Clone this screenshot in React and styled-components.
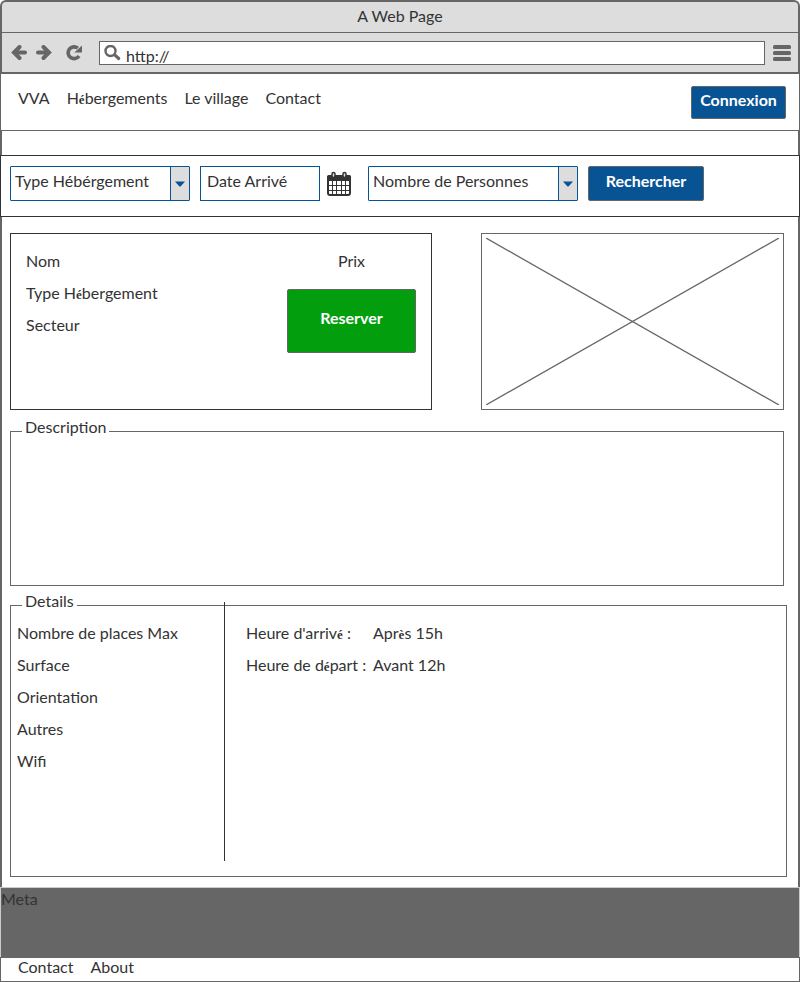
import React from "react";
import styled, { createGlobalStyle } from "styled-components";

const ink = "#333333";
const line = "#666666";
const blue = "#085394";
const chrome = "#dddddd";

const GlobalStyle = createGlobalStyle`
  *, *::before, *::after { box-sizing: border-box; }
  body { margin: 0; background: #fff; }
  body, button, input, select {
    font-family: Lato, "Open Sans", sans-serif;
    font-size: 16px;
    line-height: 20px;
    color: ${ink};
  }
`;

const Page = styled.div`
  min-height: 100vh;
  display: flex;
  flex-direction: column;
`;

const BrowserBar = styled.header`
  border: 2px solid ${line};
  border-radius: 6px 6px 0 0;
  background: ${chrome};
`;

const TitleBar = styled.div`
  padding: 4px 0 6px;
  border-bottom: 1px solid ${line};
  text-align: center;
`;

const Toolbar = styled.div`
  height: 39px;
  padding: 0 7px 0 9px;
  display: flex;
  align-items: center;
`;

const ToolButton = styled.button`
  width: 16px;
  height: 16px;
  margin-right: ${(p) => p.$after || 0}px;
  padding: 0;
  display: flex;
  flex: none;
  border: 0;
  background: none;
`;

const Address = styled.label`
  flex: 1;
  height: 24px;
  margin-right: 8px;
  padding: 0 4px;
  display: flex;
  align-items: flex-start;
  gap: 5px;
  overflow: hidden;
  border: 1px solid ${line};
  background: #fff;

  svg { flex: none; margin-top: 3px; }
`;

const AddressInput = styled.input`
  flex: 1;
  min-width: 0;
  height: 22px;
  padding: 6px 0 0;
  border: 0;
  outline: 0;
  background: none;
`;

const Menu = styled(ToolButton)`
  width: 18px;
  height: 18px;
`;

const NavBar = styled.nav`
  padding: 12px 13px 11px 17px;
  display: flex;
  justify-content: space-between;
  border: solid ${line};
  border-width: 0 1px 1px;
`;

const Links = styled.ul`
  margin: 0;
  padding: ${(p) => p.$top || 0}px 0 0;
  display: flex;
  gap: 17px;
  line-height: 18px;
  list-style: none;
`;

const Link = styled.a`
  color: inherit;
  text-decoration: none;
`;

const Button = styled.button`
  width: ${(p) => p.$width}px;
  height: ${(p) => p.$height}px;
  padding: 0 0 6px;
  border: 1px solid ${line};
  border-radius: 2px;
  background: ${(p) => p.$color || blue};
  color: #fff;
  font-weight: 700;
`;

const Band = styled.div`
  height: 24px;
  border: solid ${line};
  border-width: 0 2px;
`;

const SearchForm = styled.form`
  padding: 10px 9px 15px;
  display: flex;
  gap: 10px;
  border: 1px solid ${ink};
`;

const SelectBox = styled.span`
  width: ${(p) => p.$width}px;
  height: 35px;
  display: grid;
  grid-template-columns: 1fr 19px;
  border: 1px solid ${blue};
  border-radius: 1px;
`;

const Select = styled.select`
  grid-area: 1 / 1 / 2 / 3;
  min-width: 0;
  padding: 0 20px 6px 4px;
  border: 0;
  background: #fff;
  appearance: none;
`;

const SelectArrow = styled.span`
  grid-area: 1 / 2 / 2 / 3;
  display: flex;
  align-items: center;
  justify-content: center;
  border-left: 1px solid ${blue};
  background: ${chrome};
  pointer-events: none;
`;

const DateField = styled.span`
  display: flex;
`;

const DateInput = styled.input`
  width: 120px;
  height: 35px;
  padding: 0 6px 6px;
  border: 1px solid ${blue};

  &::placeholder { color: ${ink}; opacity: 1; }
`;

const CalendarButton = styled.button`
  width: 38px;
  padding: 0;
  display: flex;
  align-items: center;
  justify-content: center;
  border: 0;
  background: none;
`;

const Main = styled.main`
  flex: 1;
  padding: 16px 11px 10px 8px;
  border: solid ${line};
  border-width: 0 2px;
`;

const Summary = styled.section`
  margin-right: 3px;
  display: grid;
  grid-template-columns: 422fr 303fr;
  gap: 49px;
`;

const Card = styled.div`
  height: 177px;
  padding: 11px 15px;
  display: flex;
  justify-content: space-between;
  border: 1px solid ${ink};
`;

const Lines = styled.ul`
  margin: 0;
  padding: 0;
  list-style: none;
  line-height: 32px;
`;

const Booking = styled.div`
  display: flex;
  flex-direction: column;
  align-items: center;
  gap: 12px;
  line-height: 32px;
`;

const Picture = styled.div`
  height: 177px;
  padding: 4px;
  border: 1px solid ${line};

  svg { display: block; width: 100%; height: 100%; }
`;

const Group = styled.fieldset`
  height: ${(p) => p.$height}px;
  min-width: 0;
  margin: ${(p) => (p.$wide ? "5px 0 0" : "7px 3px 0 0")};
  padding: 0 6px;
  border: 1px solid ${line};
`;

const Legend = styled.legend`
  margin-left: 5px;
  padding: 0 3px 8px;
`;

const DetailColumns = styled.div`
  height: 259px;
  margin-top: -17px;
  display: grid;
  grid-template-columns: 208px 1fr;
`;

const Features = styled.div`
  padding-top: 15px;
  border-right: 1px solid ${ink};
`;

const Hours = styled.dl`
  margin: 0;
  padding: 15px 0 0 21px;
  display: grid;
  grid-template-columns: 127px 1fr;
  align-content: start;
  line-height: 32px;

  dt, dd { margin: 0; white-space: nowrap; }
`;

const Accent = styled.span`
  font-family: "Liberation Serif", serif;
  font-size: 13px;
  font-weight: 700;
  line-height: 1;
`;

const Meta = styled.section`
  height: 70px;
  padding-top: 1px;
  border: solid #cccccc;
  border-width: 1px 1px 0;
  background: ${line};
`;

const Footer = styled.footer`
  height: 25px;
  padding-left: 17px;
  border: 1px solid ${line};
`;

/* Accented letters are set smaller than the text around them. */
const Text = ({ children }) =>
  children
    .split(/([éè])/)
    .map((part, i) => (i % 2 ? <Accent key={i}>{part}</Accent> : part));

const Arrow = ({ back }) => (
  <svg width="16" height="16" viewBox="0 0 16 16" fill="none" stroke={line} strokeWidth="4">
    {back ? (
      <>
        <path d="M4 7.500H14" strokeLinecap="round" />
        <path d="M8.500 2L3 7.500L8.500 13" strokeLinecap="round" />
      </>
    ) : (
      <>
        <path d="M12 7.500H2" strokeLinecap="round" />
        <path d="M7.500 2L13 7.500L7.500 13" strokeLinecap="round" />
      </>
    )}
  </svg>
);

const Reload = () => (
  <svg width="16" height="16" viewBox="0 0 16 16">
    <path d="M13 11A5.900 5.900 0 1 1 11.800 3.200" fill="none" stroke={line} strokeWidth="3.600" />
    <path d="M16 0.500V7.500H8.400Z" fill={line} />
  </svg>
);

const Magnifier = () => (
  <svg width="17" height="16" viewBox="0 0 17 16" fill="none" stroke={line}>
    <circle cx="6.500" cy="6" r="5" strokeWidth="2.400" />
    <path d="M10.700 9.900L14.700 13.500" strokeWidth="3.200" strokeLinecap="round" />
  </svg>
);

const Bars = () => (
  <svg width="18" height="18" viewBox="0 0 18 18" fill={line}>
    <rect y="1" width="18" height="4" rx="1.500" />
    <rect y="7" width="18" height="4" rx="1.500" />
    <rect y="13" width="18" height="4" rx="1.500" />
  </svg>
);

const Calendar = () => (
  <svg width="24" height="26" viewBox="0 0 24 26">
    <rect x="1" y="5" width="22" height="19" rx="2" fill="#fff" stroke={ink} strokeWidth="2" />
    <path d="M0 10V6a2 2 0 0 1 2-2h20a2 2 0 0 1 2 2v4Z" fill={ink} />
    <path d="M5.500 10v14M9.500 10v14M14.500 10v14M18.500 10v14M1 14.500h22M1 19.500h22" stroke={ink} />
    <rect x="5" y="1.500" width="3" height="5" rx="1.500" fill="#ddd" stroke={ink} strokeWidth="1.500" />
    <rect x="16" y="1.500" width="3" height="5" rx="1.500" fill="#ddd" stroke={ink} strokeWidth="1.500" />
  </svg>
);

const Dropdown = ({ label, width }) => (
  <SelectBox $width={width}>
    <Select aria-label={label}>
      <option>{label}</option>
    </Select>
    <SelectArrow>
      <svg width="10" height="6" viewBox="0 0 10 6">
        <path d="M0 0.500H10L6 5Q5 6 4 5Z" fill={blue} />
      </svg>
    </SelectArrow>
  </SelectBox>
);

const LinkList = ({ items, top }) => (
  <Links $top={top}>
    {items.map((item) => (
      <li key={item}>
        <Link href="#"><Text>{item}</Text></Link>
      </li>
    ))}
  </Links>
);

const LineList = ({ items }) => (
  <Lines>
    {items.map((item) => (
      <li key={item}><Text>{item}</Text></li>
    ))}
  </Lines>
);

export default function App() {
  return (
    <Page>
      <GlobalStyle />
      <BrowserBar>
        <TitleBar>A Web Page</TitleBar>
        <Toolbar>
          <ToolButton aria-label="Back" $after={9}><Arrow back /></ToolButton>
          <ToolButton aria-label="Forward" $after={14}><Arrow /></ToolButton>
          <ToolButton aria-label="Reload" $after={17}><Reload /></ToolButton>
          <Address>
            <Magnifier />
            <AddressInput aria-label="Address" defaultValue="http://" />
          </Address>
          <Menu aria-label="Menu"><Bars /></Menu>
        </Toolbar>
      </BrowserBar>

      <NavBar>
        <LinkList top={3} items={["VVA", "Hébergements", "Le village", "Contact"]} />
        <Button $width={95} $height={33}>Connexion</Button>
      </NavBar>
      <Band />

      <SearchForm onSubmit={(e) => e.preventDefault()}>
        <Dropdown label="Type Hébérgement" width={180} />
        <DateField>
          <DateInput aria-label="Date Arrivé" placeholder="Date Arrivé" />
          <CalendarButton type="button" aria-label="Calendar"><Calendar /></CalendarButton>
        </DateField>
        <Dropdown label="Nombre de Personnes" width={210} />
        <Button $width={116} $height={35}>Rechercher</Button>
      </SearchForm>

      <Main>
        <Summary>
          <Card>
            <LineList items={["Nom", "Type Hébergement", "Secteur"]} />
            <Booking>
              <span>Prix</span>
              <Button $width={129} $height={64} $color="#029e0e">Reserver</Button>
            </Booking>
          </Card>
          <Picture>
            <svg viewBox="0 0 294 168" preserveAspectRatio="none" stroke={line} role="img" aria-label="Photo">
              <path d="M0 0L294 168M294 0L0 168" strokeWidth="1.300" />
            </svg>
          </Picture>
        </Summary>

        <Group $height={169}>
          <Legend>Description</Legend>
        </Group>

        <Group $height={286} $wide>
          <Legend>Details</Legend>
          <DetailColumns>
            <Features>
              <LineList items={["Nombre de places Max", "Surface", "Orientation", "Autres", "Wifi"]} />
            </Features>
            <Hours>
              <dt><Text>Heure d'arrivé :</Text></dt>
              <dd><Text>Après 15h</Text></dd>
              <dt><Text>Heure de départ :</Text></dt>
              <dd>Avant 12h</dd>
            </Hours>
          </DetailColumns>
        </Group>
      </Main>

      <Meta>Meta</Meta>
      <Footer>
        <LinkList items={["Contact", "About"]} />
      </Footer>
    </Page>
  );
}
